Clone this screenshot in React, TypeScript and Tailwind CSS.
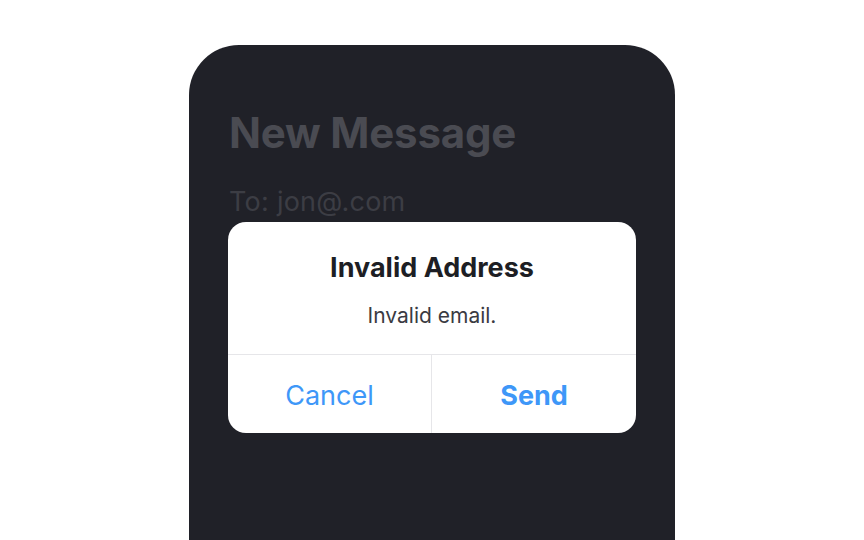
import React from 'react';

const font = { fontFamily: 'Inter, "Noto Sans", sans-serif' };

const App = () => {
  return (
    <div className="w-full h-[540px] bg-white overflow-hidden" style={font}>
      <div className="relative mx-auto mt-[45px] w-[486px] h-[495px] bg-[#202128] rounded-t-[50px] px-10 pt-[60px]">
        <h1 className="text-[42px] leading-[56px] font-bold text-[#4a4b52] tracking-[-0.2px]">New Message</h1>
        <p className="mt-[25px] text-[27px] leading-[32px] text-[#3c3d44] tracking-[0.25px]">To: jon@.com</p>

        {/* alert overlay */}
        <div className="absolute left-[39px] right-[39px] top-[177px] bg-white rounded-[18px] overflow-hidden">
          <div className="flex flex-col items-center pt-[30px] pb-[25px]">
            <h2 className="text-[27px] leading-[32px] font-bold text-[#1d1e24]">Invalid Address</h2>
            <p className="mt-[19px] text-[21px] leading-[26px] text-[#3a3b42]">Invalid email.</p>
          </div>
          <div className="grid grid-cols-2 border-t border-[#e6e6e9] h-[79px]">
            <button className="pt-[5px] text-[27px] text-[#3e97f8] border-r border-[#e6e6e9]">Cancel</button>
            <button className="pt-[5px] text-[27px] font-bold text-[#3e97f8]">Send</button>
          </div>
        </div>
      </div>
    </div>
  );
};

export default App;
